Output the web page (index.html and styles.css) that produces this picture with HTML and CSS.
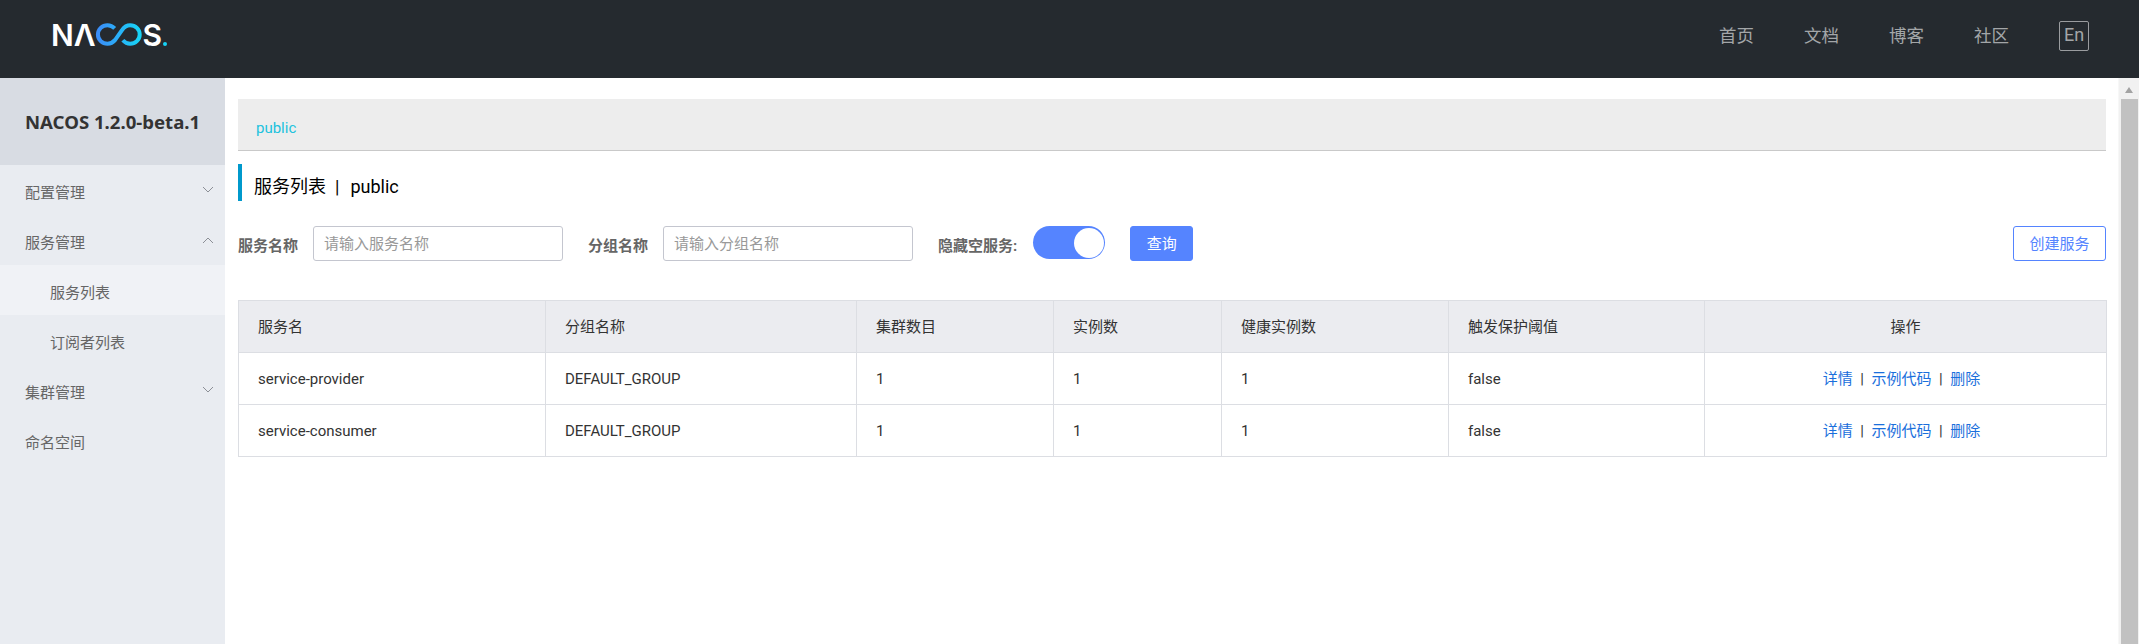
FILE: index.html
```html
<!DOCTYPE html>
<html lang="zh-CN">
<head>
<meta charset="utf-8">
<title>Nacos</title>
<link rel="stylesheet" href="styles.css">
</head>
<body>
<header class="topbar">
  <div class="logo" aria-label="NACOS">
    <span class="logo-text">NΛ</span>
    <svg class="logo-loop" width="48" height="23" viewBox="0 0 50 24" aria-hidden="true">
      <defs>
        <linearGradient id="loop" x1="0" y1="0" x2="1" y2="0">
          <stop offset="0" stop-color="#3b8df8"/>
          <stop offset="1" stop-color="#17d3f5"/>
        </linearGradient>
      </defs>
      <path d="M20.5 5.6C18.6 3.6 16 2.3 13 2.3C7.5 2.3 3 6.6 3 12C3 17.4 7.5 21.7 13 21.7C16.5 21.7 19 20 21 17.6L28.5 7C30.5 4 33.2 2.3 36.6 2.3C42.1 2.3 46.6 6.6 46.6 12C46.6 17.4 42.1 21.7 36.6 21.7C33.4 21.7 31 20.2 29 18" fill="none" stroke="url(#loop)" stroke-width="4.2"/>
    </svg>
    <span class="logo-text logo-s">S</span>
    <span class="logo-dot"></span>
  </div>
  <nav class="topnav">
    <a class="topnav-item">首页</a>
    <a class="topnav-item">文档</a>
    <a class="topnav-item">博客</a>
    <a class="topnav-item">社区</a>
    <a class="lang">En</a>
  </nav>
</header>
<div class="body-row">
  <aside class="sidebar">
    <div class="product">NACOS 1.2.0-beta.1</div>
    <ul class="menu">
      <li class="menu-item">配置管理
        <svg class="chev" width="12" height="8" viewBox="0 0 12 8"><path d="M1 1l5 5 5-5"/></svg>
      </li>
      <li class="menu-item">服务管理
        <svg class="chev" width="12" height="8" viewBox="0 0 12 8"><path d="M1 7l5-5 5 5"/></svg>
      </li>
      <li class="menu-item sub active">服务列表</li>
      <li class="menu-item sub">订阅者列表</li>
      <li class="menu-item">集群管理
        <svg class="chev" width="12" height="8" viewBox="0 0 12 8"><path d="M1 1l5 5 5-5"/></svg>
      </li>
      <li class="menu-item">命名空间</li>
    </ul>
  </aside>
  <main class="content">
    <div class="namespace"><span class="namespace-name">public</span></div>
    <h1 class="page-title"><span>服务列表</span><span class="title-sep">|</span><span>public</span></h1>
    <form class="filters">
      <label class="field-label">服务名称</label>
      <input class="field-input" placeholder="请输入服务名称">
      <label class="field-label label-2">分组名称</label>
      <input class="field-input" placeholder="请输入分组名称">
      <label class="field-label label-3">隐藏空服务:</label>
      <span class="switch"><span class="switch-knob"></span></span>
      <button type="button" class="btn btn-primary">查询</button>
      <button type="button" class="btn btn-outline">创建服务</button>
    </form>
    <table class="services">
      <colgroup>
        <col class="c1"><col class="c2"><col class="c3"><col class="c4"><col class="c5"><col class="c6"><col class="c7">
      </colgroup>
      <thead>
        <tr><th>服务名</th><th>分组名称</th><th>集群数目</th><th>实例数</th><th>健康实例数</th><th>触发保护阈值</th><th class="center">操作</th></tr>
      </thead>
      <tbody>
        <tr>
          <td>service-provider</td><td>DEFAULT_GROUP</td><td>1</td><td>1</td><td>1</td><td>false</td>
          <td class="center actions"><a class="link">详情</a><span class="sep">|</span><a class="link">示例代码</a><span class="sep">|</span><a class="link">删除</a></td>
        </tr>
        <tr>
          <td>service-consumer</td><td>DEFAULT_GROUP</td><td>1</td><td>1</td><td>1</td><td>false</td>
          <td class="center actions"><a class="link">详情</a><span class="sep">|</span><a class="link">示例代码</a><span class="sep">|</span><a class="link">删除</a></td>
        </tr>
      </tbody>
    </table>
  </main>
  <div class="scrollbar">
    <span class="scroll-arrow"></span>
    <span class="scroll-thumb"></span>
  </div>
</div>
</body>
</html>
```
FILE: styles.css
```css
* { box-sizing: border-box; }
html, body { margin: 0; height: 100%; overflow: hidden; }
body {
  font-family: Roboto, "Noto Sans CJK SC", sans-serif;
  font-size: 15px;
  color: #333;
  background: #fff;
  display: flex;
  flex-direction: column;
}
.topbar {
  flex: 0 0 78px;
  background: #252a2f;
  display: flex;
  align-items: center;
  justify-content: space-between;
  padding: 0 50px 0 51px;
}
.logo { display: flex; align-items: center; height: 24px; margin-top: -9px; }
.logo-text { font-family: Inter, sans-serif; font-weight: 600; font-size: 30px; line-height: 24px; color: #fff; }
.logo-loop { margin-left: -1px; }
.logo-dot { width: 4px; height: 4px; border-radius: 50%; background: #17d3f5; margin: 19px 0 0 1px; }
.topnav { display: flex; align-items: center; margin-top: -6px; }
.topnav-item { width: 85px; font-size: 17.5px; color: #a3a6a8; line-height: 30px; }
.lang {
  width: 30px; height: 30px;
  border: 1px solid #9a9c9f; border-radius: 2px;
  color: #a3a6a8; font-size: 18px; line-height: 26px; text-align: center;
}
.body-row { flex: 1; display: flex; min-height: 0; }
.sidebar { flex: 0 0 225px; background: #e9ecf1; }
.product {
  height: 87px;
  background: #d8dce3;
  color: #333;
  font-family: "Noto Sans", sans-serif;
  font-size: 18.6px;
  font-weight: 700;
  line-height: 87px;
  padding-left: 25px;
  white-space: nowrap;
}
.menu { list-style: none; margin: 0; padding: 0; }
.menu-item {
  height: 50px;
  padding: 3px 11px 0 25px;
  color: #666; font-size: 15px;
  display: flex; align-items: center; justify-content: space-between;
}
.menu-item.sub { padding-left: 50px; }
.menu-item.active { background: #f0f2f6; }
.chev { fill: none; stroke: #8c8f96; stroke-width: 1; margin-top: -4px; }
.content { flex: 1; min-width: 0; padding: 21px 12px 0 13px; }
.namespace {
  height: 52px;
  background: #ededed;
  border-bottom: 1px solid #c9c9c9;
  padding: 15px 0 0 18px;
}
.namespace-name { color: #21c2dd; font-size: 15px; line-height: 28px; display: block; }
.page-title {
  height: 37px; margin: 13px 0 25px;
  padding: 9px 0 0 12px;
  border-left: 4px solid #09c;
  font-size: 18px; font-weight: 400; line-height: 28px; color: #000;
  display: flex;
}
.title-sep { margin: 0 11px 0 9px; }
.filters { display: flex; align-items: center; height: 35px; margin-bottom: 39px; }
.field-label { color: #666; font-size: 15px; font-weight: 700; white-space: nowrap; padding-top: 1px; }
.field-input {
  width: 250px; height: 35px; margin-left: 15px;
  border: 1px solid #c4c6cf; border-radius: 3px;
  padding: 1px 10px 0; font: inherit; font-size: 15px; outline: none;
}
.field-input::placeholder { color: #999; }
.label-2 { margin-left: 25px; }
.label-3 { margin-left: 25px; }
.switch {
  width: 72px; height: 33px; margin: -2px 0 0 16px;
  border-radius: 17px; background: #5584ff;
  position: relative; display: block;
}
.switch-knob {
  position: absolute; right: 1px; top: 2px;
  width: 30px; height: 30px; border-radius: 50%; background: #fff;
}
.btn { height: 35px; border-radius: 3px; font: inherit; font-size: 15px; padding: 0 0 2px; cursor: pointer; }
.btn-primary { width: 63px; margin-left: 25px; background: #5584ff; border: 1px solid #5584ff; color: #fff; }
.btn-outline { width: 93px; margin-left: auto; background: #fff; border: 1px solid #5584ff; color: #5584ff; }
.services {
  width: 1868px; table-layout: fixed; border-collapse: collapse;
  border: 1px solid #dcdee3;
}
.c1 { width: 307px; } .c2 { width: 311px; } .c3 { width: 197px; } .c4 { width: 168px; }
.c5 { width: 227px; } .c6 { width: 256px; } .c7 { width: 402px; }
.services th, .services td {
  border: 1px solid #dcdee3;
  padding: 0 19px;
  height: 52px;
  text-align: left;
  font-size: 15px;
  font-weight: 400;
  color: #333;
}
.services th { background: #ebecf0; padding-bottom: 2px; }
.services .center { text-align: center; }
.services .actions { padding-right: 27px; padding-bottom: 2px; }
.link { color: #1a6fdc; }
.sep { color: #333; margin: 0 7.5px; }
.scrollbar {
  flex: 0 0 21px; background: #f1f1f1;
  border-left: 1px solid #f7f7f7;
  display: flex; flex-direction: column; align-items: center;
}
.scroll-arrow {
  width: 0; height: 0; margin-top: 9px; margin-bottom: 6px;
  border-left: 4.5px solid transparent; border-right: 4.5px solid transparent;
  border-bottom: 6px solid #a3a3a3;
}
.scroll-thumb { width: 17px; flex: 1; background: #c1c1c1; }
```
